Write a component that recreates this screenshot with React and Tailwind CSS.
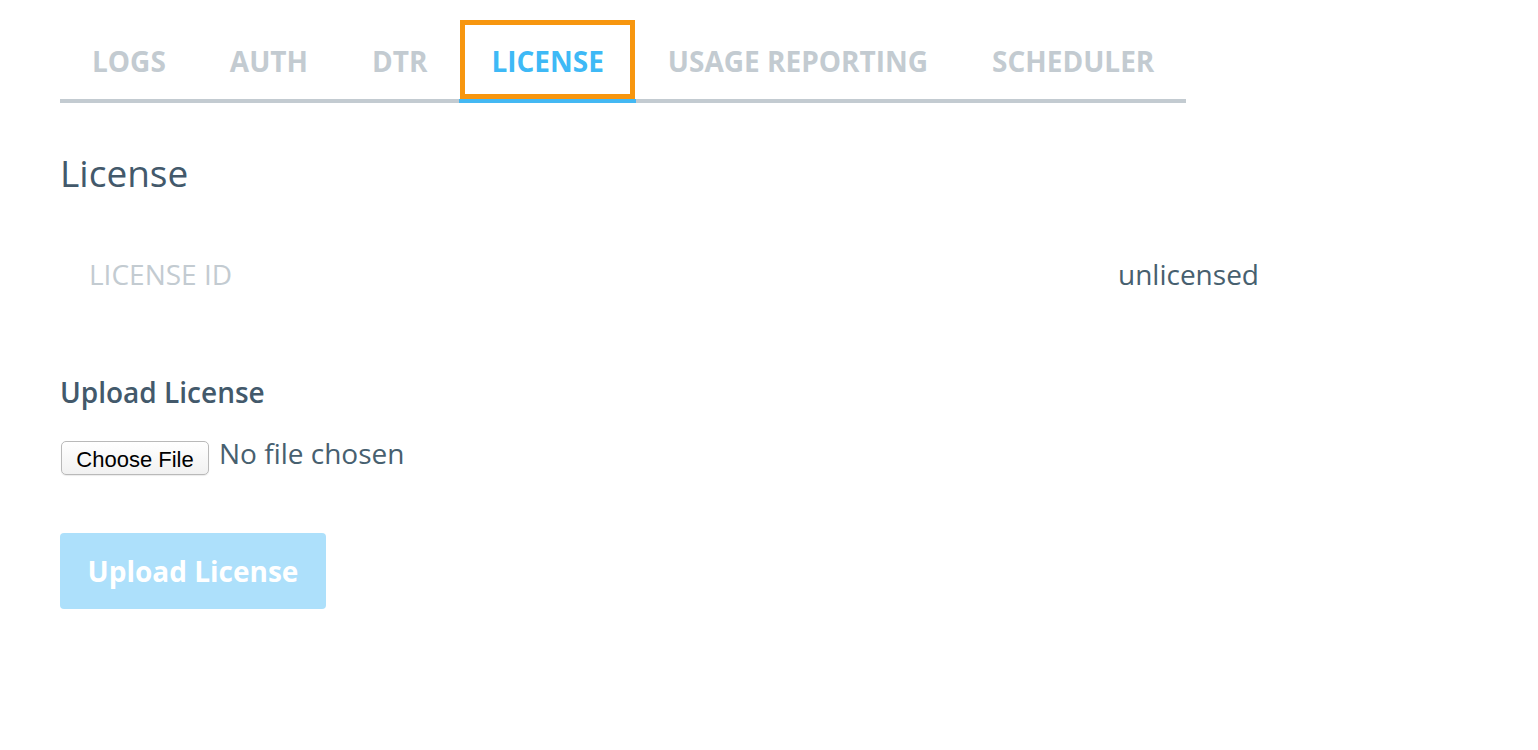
import React from 'react';

const tabs = ['LOGS', 'AUTH', 'DTR', 'LICENSE', 'USAGE REPORTING', 'SCHEDULER'];

const TabBar = ({ active }) => (
  <div className="flex w-[1126px] border-b-4 border-[#c3cbd1]">
    {tabs.map((t) => {
      const isActive = t === active;
      return (
        <div
          key={t}
          className={`relative flex-none whitespace-nowrap -mb-[4px] h-[83px] px-[32px] pt-[7px] pb-[4px] flex items-center text-[28px] font-bold ${
            isActive ? 'text-[#3eb9f6] border-b-4 border-[#44b8f3]' : 'text-[#c3cbd1] border-b-4 border-transparent'
          }`}
        >
          {t}
          {/* highlight annotation */}
          {isActive && (
            <div className="absolute left-[1px] right-[1px] top-0 bottom-0 border-[5px] border-[#f7960f] pointer-events-none"></div>
          )}
        </div>
      );
    })}
  </div>
);

export default function App() {
  return (
    <div
      className="min-h-[750px] bg-white pl-[60px] pt-[20px] text-[#43596b]"
      style={{ fontFamily: '"Open Sans", "Liberation Sans", sans-serif' }}
    >
      <TabBar active="LICENSE" />

      <h1 className="mt-[45px] text-[37px] leading-[50px] font-normal text-[#43596b]">License</h1>

      {/* License info */}
      <div className="mt-[57px] grid grid-cols-[1058px_auto] text-[28px] leading-[38px]">
        <div className="pl-[29px] text-[#c3cbd1]">LICENSE ID</div>
        <div className="text-[#47606f]">unlicensed</div>
      </div>

      {/* Upload */}
      <h2 className="mt-[80px] text-[28px] leading-[38px] font-semibold text-[#43596b]">Upload License</h2>

      <div className="mt-[30px] flex items-center gap-[10px]">
        <button
          className="h-[34px] w-[148px] ml-[1px] rounded-[5px] border border-[#b9b9b9] bg-gradient-to-b from-white to-[#f1f1f1] text-[22px] text-black shadow-[0_1px_1px_rgba(0,0,0,0.08)] flex items-center justify-center pt-[3px]"
          style={{ fontFamily: '"Liberation Sans", Arial, sans-serif' }}
        >
          Choose File
        </button>
        <span className="text-[28px] leading-[38px] -mt-[10px] text-[#47606f]">No file chosen</span>
      </div>

      <button className="mt-[58px] h-[76px] w-[266px] rounded-[4px] bg-[#ade0fb] text-white text-[28px] font-bold flex items-center justify-center">
        Upload License
      </button>
    </div>
  );
}
